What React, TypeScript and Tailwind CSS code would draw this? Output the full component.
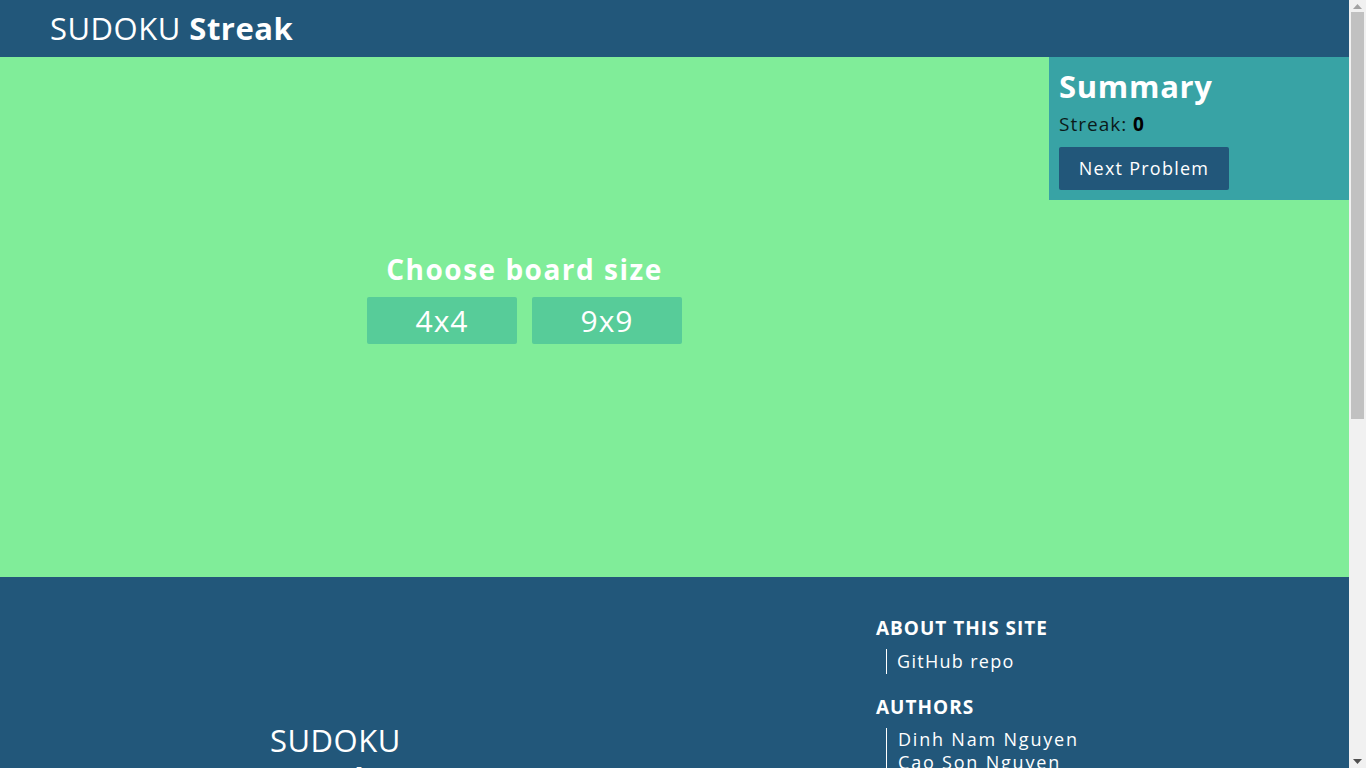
import React from "react";

const font = { fontFamily: '"Open Sans", "Liberation Sans", sans-serif' };

function Scrollbar() {
  return (
    <div className="sticky top-0 h-[768px] w-[17px] shrink-0 bg-[#f1f1f1] flex flex-col items-center">
      <div className="h-[12px] w-full flex items-center justify-center">
        <svg width="9" height="5" viewBox="0 0 9 5">
          <path d="M0 5 L4.5 0 L9 5 Z" fill="#a3a3a3" />
        </svg>
      </div>
      <div className="w-[13px] h-[407px] bg-[#c1c1c1]" />
      <div className="flex-1" />
      <div className="h-[14px] w-full flex items-center justify-center">
        <svg width="9" height="5" viewBox="0 0 9 5">
          <path d="M0 0 L9 0 L4.5 5 Z" fill="#505050" />
        </svg>
      </div>
    </div>
  );
}

export default function App() {
  return (
    <div className="flex bg-[#80ED99]" style={font}>
      <div className="w-[1349px] shrink-0 text-white">
        <header className="h-[57px] bg-[#22577A] flex items-center pl-[50px]">
          <div className="text-[31px] leading-none tracking-[0.5px]">
            SUDOKU <span className="font-bold">Streak</span>
          </div>
        </header>

        <main className="flex h-[520px] bg-[#80ED99]">
          <div className="flex-1 flex flex-col items-center pt-[193px]">
            <h2 className="text-[28px] font-bold leading-[38px] tracking-[1.5px]">Choose board size</h2>
            <div className="mt-[9px] flex gap-[15px]">
              <button className="w-[150px] h-[47px] rounded-[2px] bg-[#57CC99] text-[30px] leading-none tracking-[1px] text-white">
                4x4
              </button>
              <button className="w-[150px] h-[47px] rounded-[2px] bg-[#57CC99] text-[30px] leading-none tracking-[1px] text-white">
                9x9
              </button>
            </div>
          </div>
          <aside className="w-[300px] h-[143px] bg-[#38A3A5] px-[10px] pt-[10px]">
            <h3 className="text-[31px] font-bold leading-[38px] tracking-[0.7px]">Summary</h3>
            <p className="mt-[8px] text-[19px] leading-[22px] tracking-[1px] text-[#0b1a1a]">
              Streak: <span className="font-bold text-black">0</span>
            </p>
            <button className="mt-[12px] w-[170px] h-[43px] rounded-[2px] bg-[#22577A] text-[18px] tracking-[1.25px] text-white">
              Next Problem
            </button>
          </aside>
        </main>

        <footer className="h-[808px] bg-[#22577A] flex">
          <div className="w-[876px] pl-[270px] pt-[144px]">
            <div className="w-[150px] text-[31px] leading-[38px] tracking-[0.5px]">
              SUDOKU <span className="font-bold">Streak</span>
            </div>
          </div>
          <div className="pt-[38px]">
            <h4 className="text-[19px] font-bold leading-[26px] uppercase tracking-[1px]">About this site</h4>
            <ul className="mt-[8px] ml-[10px] border-l border-white pl-[10px] text-[18px] leading-[25px] tracking-[1.3px]">
              <li>GitHub repo</li>
            </ul>
            <h4 className="mt-[20px] text-[19px] font-bold leading-[26px] uppercase tracking-[1px]">Authors</h4>
            <ul className="mt-[8px] ml-[10px] border-l border-white pl-[11px] text-[18px] leading-[23px] tracking-[1.8px]">
              <li>Dinh Nam Nguyen</li>
              <li>Cao Son Nguyen</li>
            </ul>
          </div>
        </footer>
      </div>
      <Scrollbar />
    </div>
  );
}
